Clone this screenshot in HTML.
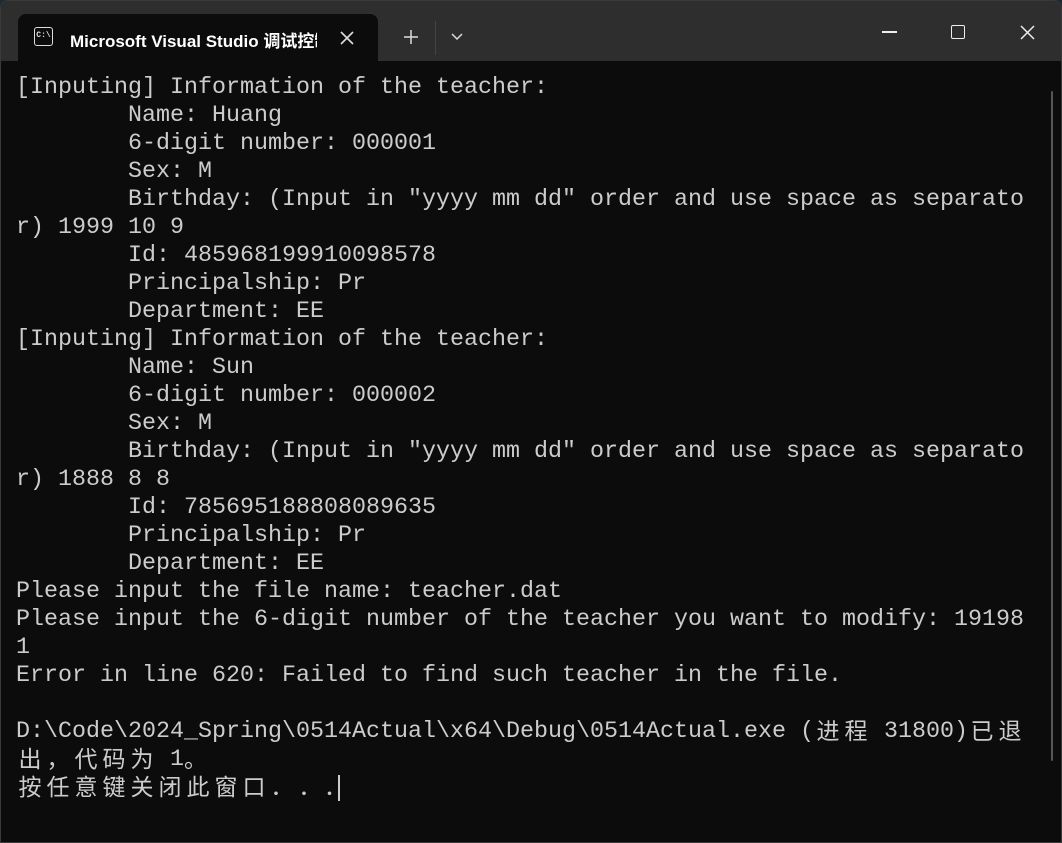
<!DOCTYPE html>
<html><head><meta charset="utf-8"><style>
html,body{margin:0;padding:0;width:1062px;height:843px;background:#1c2a33;overflow:hidden}
.win{position:absolute;left:0;top:0;width:1060px;height:841px;background:#0c0c0c;border:1px solid #3a3a3a;border-radius:8px 8px 0 0;overflow:hidden}
.title{position:absolute;left:0;top:0;right:0;height:60px;background:#2e2e2e}
.tab{position:absolute;left:17px;top:13px;width:360px;height:47px;background:#0c0c0c;border-radius:8px 8px 0 0}
.tab .t{position:absolute;left:52px;top:13px;color:#fff;font:600 17px "Liberation Sans","Noto Sans CJK SC",sans-serif;white-space:nowrap;width:247px;overflow:hidden}
.icon{position:absolute;left:16px;top:13px;width:19px;height:19px;border:1.5px solid #ddd;border-radius:3px;color:#ddd;font:bold 8px "Liberation Mono",monospace;line-height:16px;text-align:center;box-sizing:border-box}
.term{position:absolute;left:15px;top:73px;color:#cccccc;font:23.33px "Liberation Mono","Noto Sans CJK SC",monospace;line-height:28px;white-space:pre}
.term div{height:28px}
.c{display:inline-block;width:28px;height:28px;line-height:28px;vertical-align:top;text-align:center;font-family:"Noto Sans CJK SC",sans-serif;font-size:23px;position:relative;top:-3px}
.cur{display:inline-block;width:2px;height:26px;background:#ccc;vertical-align:top;margin-top:1px}
</style></head><body>
<div class="win">
<div class="title">
 <div class="tab"><div class="icon">C:\</div><div class="t">Microsoft Visual Studio 调试控制台</div>
 <svg style="position:absolute;left:322px;top:17px" width="14" height="14"><path d="M1 1L13 13M13 1L1 13" stroke="#ddd" stroke-width="1.6"/></svg></div>
 <svg style="position:absolute;left:402px;top:28px" width="16" height="16"><path d="M8 1V15M1 8H15" stroke="#ddd" stroke-width="1.5"/></svg>
 <div style="position:absolute;left:434px;top:20px;width:1px;height:34px;background:#444"></div>
 <svg style="position:absolute;left:450px;top:32px" width="12" height="8"><path d="M1 1L6 6L11 1" stroke="#ddd" stroke-width="1.5" fill="none"/></svg>
 <div style="position:absolute;left:881px;top:30px;width:15px;height:1.5px;background:#eee"></div>
 <div style="position:absolute;left:950px;top:24px;width:14px;height:14px;border:1.5px solid #eee;border-radius:2px;box-sizing:border-box"></div>
 <svg style="position:absolute;left:1019px;top:24px" width="15" height="15"><path d="M1 1L14 14M14 1L1 14" stroke="#eee" stroke-width="1.5"/></svg>
</div>
<div style="position:absolute;left:1050px;top:90px;width:2px;height:670px;background:#555;border-radius:1px"></div>
<div class="term"><div>[Inputing] Information of the teacher:</div><div>        Name: Huang</div><div>        6-digit number: 000001</div><div>        Sex: M</div><div>        Birthday: (Input in "yyyy mm dd" order and use space as separato</div><div>r) 1999 10 9</div><div>        Id: 485968199910098578</div><div>        Principalship: Pr</div><div>        Department: EE</div><div>[Inputing] Information of the teacher:</div><div>        Name: Sun</div><div>        6-digit number: 000002</div><div>        Sex: M</div><div>        Birthday: (Input in "yyyy mm dd" order and use space as separato</div><div>r) 1888 8 8</div><div>        Id: 785695188808089635</div><div>        Principalship: Pr</div><div>        Department: EE</div><div>Please input the file name: teacher.dat</div><div>Please input the 6-digit number of the teacher you want to modify: 19198</div><div>1</div><div>Error in line 620: Failed to find such teacher in the file.</div><div></div><div>D:\Code\2024_Spring\0514Actual\x64\Debug\0514Actual.exe (<span class="c">进</span><span class="c">程</span> 31800)<span class="c">已</span><span class="c">退</span></div><div><span class="c">出</span><span class="c">，</span><span class="c">代</span><span class="c">码</span><span class="c">为</span> 1<span class="c" style="width:14px;text-align:left">。</span></div><div><span class="c">按</span><span class="c">任</span><span class="c">意</span><span class="c">键</span><span class="c">关</span><span class="c">闭</span><span class="c">此</span><span class="c">窗</span><span class="c">口</span><span class="c">．</span><span class="c">．</span><span class="c" style="width:14px">．</span><span class="cur"></span></div></div>
</div>
</body></html>
